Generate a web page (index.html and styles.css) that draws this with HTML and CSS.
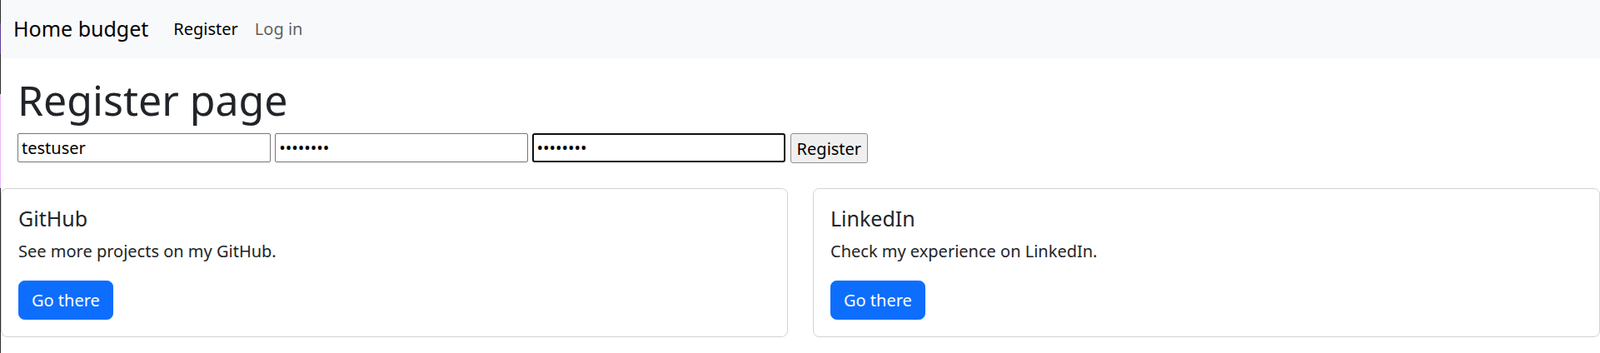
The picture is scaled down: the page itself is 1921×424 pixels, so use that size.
FILE: index.html
```html
<!DOCTYPE html>
<html lang="en">
<head>
<meta charset="utf-8">
<title>Register page</title>
<link rel="stylesheet" href="styles.css">
</head>
<body>
<div class="edge"></div>
<nav class="navbar">
  <a class="brand" href="#">Home budget</a>
  <div class="nav-links">
    <a class="nav-link active" href="#">Register</a>
    <a class="nav-link" href="#">Log in</a>
  </div>
</nav>
<main class="main">
  <h1 class="title">Register page</h1>
  <form class="reg-form">
    <input class="field" type="text" value="testuser">
    <input class="field" type="password" value="password">
    <input class="field focused" type="password" value="password">
    <button class="plain-btn" type="button">Register</button>
  </form>
</main>
<section class="cards">
  <div class="card">
    <h5 class="card-title">GitHub</h5>
    <p class="card-text">See more projects on my GitHub.</p>
    <a class="btn" href="#">Go there</a>
  </div>
  <div class="card">
    <h5 class="card-title">LinkedIn</h5>
    <p class="card-text">Check my experience on LinkedIn.</p>
    <a class="btn" href="#">Go there</a>
  </div>
</section>
</body>
</html>
```

FILE: styles.css
```css
* { box-sizing: border-box; }
html, body { margin: 0; }
body {
  padding-left: 1px;
  font-family: "Noto Sans", sans-serif;
  font-size: 20px;
  line-height: 1.5;
  color: #212529;
  background: #fff;
}
.edge {
  position: fixed;
  left: 0;
  top: 0;
  width: 1px;
  height: 100%;
  background: linear-gradient(to bottom,
    #2e2e2e 0, #2e2e2e 28px,
    #5e3d96 28px, #5e3d96 65px,
    #2e2e2e 65px, #2e2e2e 113px,
    #ebb8fb 113px, #ebb8fb 226px,
    #2e2e2e 226px, #2e2e2e 100%);
}
a { text-decoration: none; }
.navbar {
  display: flex;
  align-items: center;
  background: #f8f9fa;
  padding: 10px 15px;
  height: 70px;
}
.brand {
  font-size: 25px;
  line-height: 37.5px;
  padding: 6.25px 0;
  margin-right: 20px;
  color: #000;
}
.nav-links { display: flex; }
.nav-link {
  padding: 10px;
  line-height: 30px;
  color: rgba(0, 0, 0, 0.65);
}
.nav-link.active { color: #000; }
.main { padding: 20px 20px 0 20px; }
.title {
  font-size: 50px;
  line-height: 60px;
  font-weight: 400;
  margin: 0 0 10px;
}
.reg-form { margin: 0; height: 36px; }
.field {
  width: 304px;
  height: 35px;
  margin: 0;
  padding: 0 4px;
  font-family: "Noto Sans", sans-serif;
  font-size: 20px;
  color: #000;
  border: 1px solid #767676;
  border-radius: 2px;
  background: #fff;
  vertical-align: top;
}
.field.focused {
  border: 2px solid #101010;
  border-radius: 3px;
  padding: 0 3px;
  outline: none;
}
.plain-btn {
  height: 36px;
  margin: 0;
  padding: 0 7px;
  font-family: "Noto Sans", sans-serif;
  font-size: 20px;
  color: #000;
  background: #efefef;
  border: 1px solid #8f8f8f;
  border-radius: 3px;
  vertical-align: top;
}
.cards {
  display: flex;
  gap: 30px;
  margin-top: 30px;
}
.card {
  flex: 1;
  border: 1px solid rgba(0, 0, 0, 0.175);
  border-radius: 7.5px;
  padding: 20px;
}
.card-title {
  font-size: 25px;
  line-height: 30px;
  font-weight: 400;
  margin: 0 0 10px;
}
.card-text { margin: 0 0 20px; }
.btn {
  display: inline-block;
  padding: 7.5px 15px;
  line-height: 30px;
  color: #fff;
  background: #0d6efd;
  border: 1px solid #0d6efd;
  border-radius: 7.5px;
}
```
